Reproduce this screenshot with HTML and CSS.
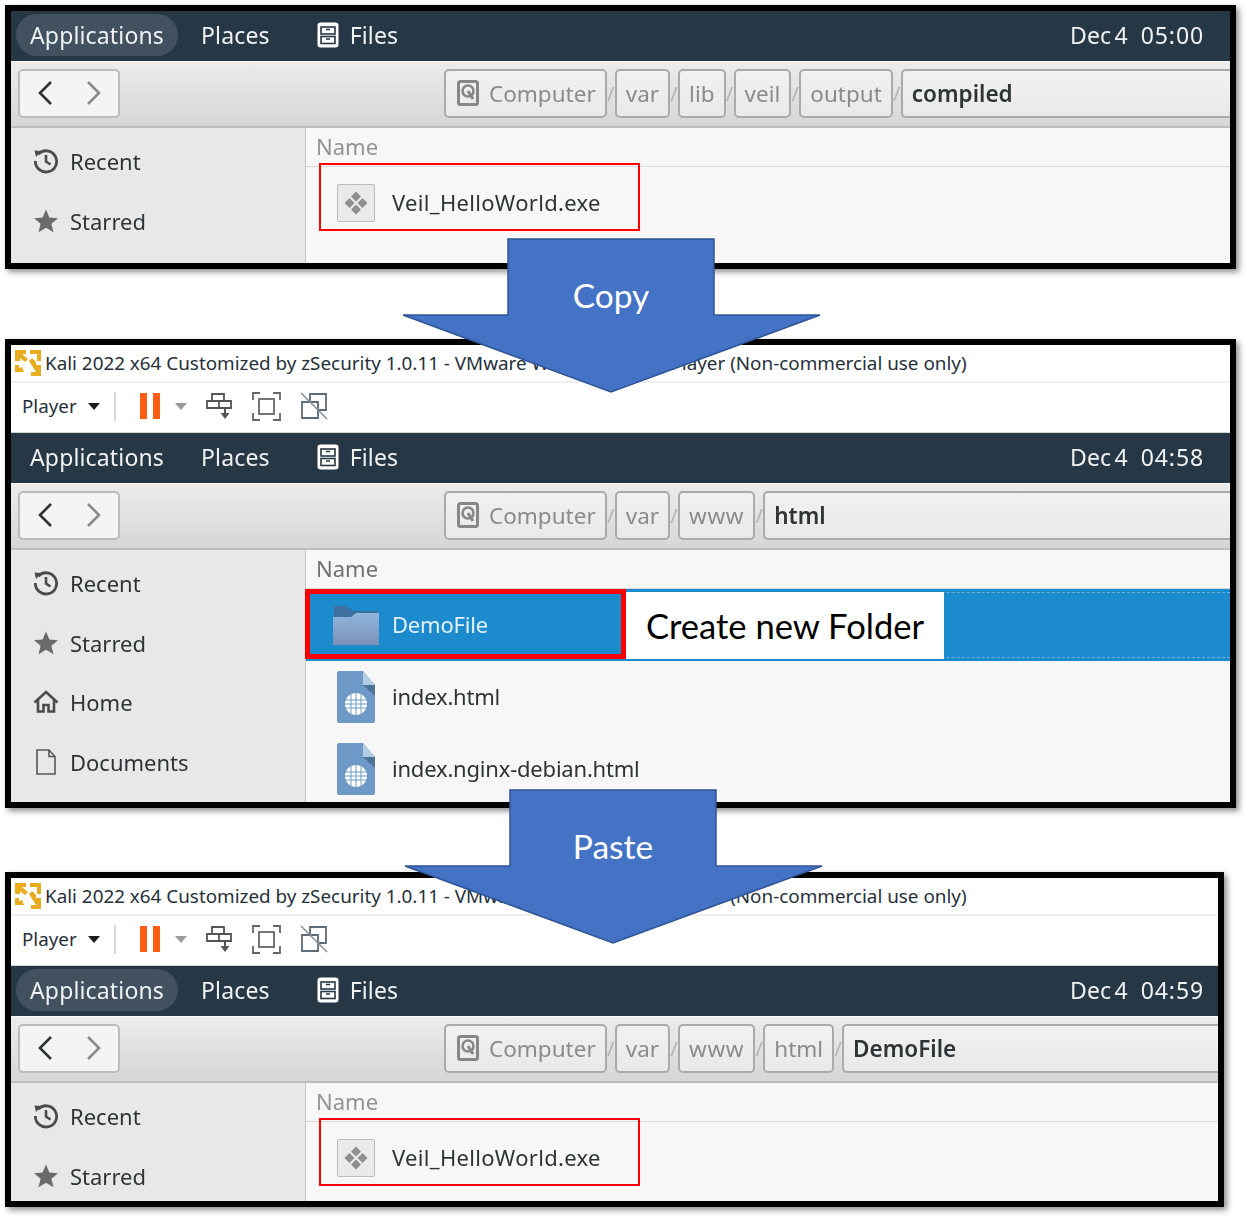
FILE: index.html
```html
<!DOCTYPE html>
<html lang="en">
    <head>
        <meta charset="UTF-8" />
        <title>Copy Veil_HelloWorld.exe to the web folder</title>
        <link rel="stylesheet" href="styles.css">
    </head>
    <body>
        <!-- Icons used more than once -->
        <svg class="sprite" aria-hidden="true">
            <defs>
                <linearGradient id="folderFront" x1="0" y1="0" x2="0" y2="1">
                    <stop offset="0" stop-color="#8fb6de" />
                    <stop offset="1" stop-color="#7c90b6" />
                </linearGradient>
            </defs>
            <symbol id="i-cabinet" viewBox="0 0 22 26">
                <rect x="0.5" y="0.5" width="21" height="25" rx="3" fill="#fff" />
                <rect x="4" y="5" width="14" height="7" fill="none" stroke="#263746" stroke-width="1.6" />
                <rect x="4" y="14.5" width="14" height="7" fill="none" stroke="#263746" stroke-width="1.6" />
                <path d="M9 7.5h4M9 17h4" stroke="#263746" stroke-width="1.6" />
            </symbol>
            <symbol id="i-back" viewBox="0 0 16 26">
                <path d="M14 2 3 13l11 11" fill="none" stroke="#2e3436" stroke-width="2.6" />
            </symbol>
            <symbol id="i-forward" viewBox="0 0 16 26">
                <path d="M2 2l11 11L2 24" fill="none" stroke="#8a8c8c" stroke-width="2.6" />
            </symbol>
            <symbol id="i-computer" viewBox="0 0 22 26">
                <rect x="1.5" y="1.5" width="19" height="23" rx="2" fill="none" stroke="#868888" stroke-width="3" />
                <circle cx="11" cy="11" r="5.5" fill="none" stroke="#868888" stroke-width="2.6" />
                <path d="M11 11l5 8" stroke="#868888" stroke-width="3" />
            </symbol>
            <symbol id="i-recent" viewBox="0 0 26 26">
                <path d="M5.2 6.2A10.6 10.6 0 1 1 2.4 13" fill="none" stroke="#4a4c4c" stroke-width="2.8" />
                <path d="M1.5 2.5 8.5 3 3 9z" fill="#4a4c4c" />
                <path d="M13 7v6.5l4.5 3" fill="none" stroke="#4a4c4c" stroke-width="2.6" />
            </symbol>
            <symbol id="i-star" viewBox="0 0 26 26">
                <path d="M13 1.5l3.4 8 8.6.7-6.6 5.6 2.1 8.5L13 19.8l-7.5 4.5 2.1-8.5L1 10.2l8.6-.7z" fill="#6a6c6c" />
            </symbol>
            <symbol id="i-home" viewBox="0 0 26 26">
                <path d="M1.5 13.5 13 3l11.5 10.5M5 11v11.5h5.5V16h5v6.5H21V11" fill="none" stroke="#4a4c4c" stroke-width="2.6" />
            </symbol>
            <symbol id="i-document" viewBox="0 0 22 26">
                <path d="M2 1h12l6 6.5V25H2zM14 1v6.5h6" fill="none" stroke="#555757" stroke-width="1.6" />
            </symbol>
            <symbol id="i-exe" viewBox="0 0 38 38">
                <rect x="0.5" y="0.5" width="37" height="37" rx="1.5" fill="#eaeaea" stroke="#bcbcbc" />
                <path d="M19 7.5l5 5-5 5-5-5zM19 20.5l5 5-5 5-5-5zM12.5 14l5 5-5 5-5-5zM25.5 14l5 5-5 5-5-5z" fill="#8f8f8f" />
            </symbol>
            <symbol id="i-folder" viewBox="0 0 46 40">
                <path d="M1 3a2 2 0 0 1 2-2h11l6 5h25v12H1z" fill="#3d6f9f" />
                <path d="M0 12h18l5-4h23v32H0z" fill="url(#folderFront)" />
            </symbol>
            <symbol id="i-html" viewBox="0 0 38 52">
                <path d="M2 0h24l12 14v36a2 2 0 0 1-2 2H2a2 2 0 0 1-2-2V2a2 2 0 0 1 2-2z" fill="#6e99c6" />
                <path d="M26 0l12 14H26z" fill="#b4cbe4" />
                <path d="M26 14h12v11z" fill="#4f7396" />
                <g fill="none" stroke="#6e99c6" stroke-width="1">
                    <circle cx="19" cy="33" r="11" fill="#fff" stroke="none" />
                    <path d="M8 29h22M8 33h22M8 37h22M14 22.500v21M19 22v22M24 22.500v21" />
                </g>
            </symbol>
            <symbol id="i-vmware" viewBox="0 0 26 26">
                <path d="M0 0h11v4H7l6 5-3 3-5-4v3H0zM15 0h11v11h-4V4h-7zM14 11l3-3 4 4v3h5v11H16v-4h5zM0 15h4v3l3-1 2 5H0z" fill="#e8ac1c" />
            </symbol>
            <symbol id="i-send" viewBox="0 0 26 26">
                <path d="M6 1h12v7H6zM1 8h12v7H1zM13 8h12v7H13z" fill="none" stroke="#555" stroke-width="1.8" />
                <path d="M19 15v6" stroke="#555" stroke-width="2" />
                <path d="M14.500 20h9L19 26z" fill="#555" />
            </symbol>
            <symbol id="i-fit" viewBox="0 0 29 29">
                <path d="M1 8V1h7M21 1h7v7M28 21v7h-7M8 28H1v-7" fill="none" stroke="#666" stroke-width="1.8" />
                <rect x="7" y="7" width="15" height="15" fill="none" stroke="#666" stroke-width="1.8" />
            </symbol>
            <symbol id="i-unity" viewBox="0 0 28 28">
                <path d="M10 9V2h16v16h-7M2 10h16v16H2z" fill="none" stroke="#5c6b78" stroke-width="1.8" />
                <path d="M1 1l26 26" stroke="#8b9096" stroke-width="1.6" />
            </symbol>
        </svg>

        <div class="page">
            <!-- First window: the compiled file -->
            <section class="shot">
                <div class="panel">
                    <span class="panel-item panel-active">Applications</span>
                    <span class="panel-item panel-places">Places</span>
                    <span class="panel-item panel-files"><svg class="icon-cabinet"><use href="#i-cabinet" /></svg>Files</span>
                    <span class="clock"><span class="clock-date">Dec 4</span><span class="clock-time">05:00</span></span>
                </div>
                <div class="pathbar">
                    <div class="nav">
                        <span class="nav-btn"><svg class="icon-nav"><use href="#i-back" /></svg></span>
                        <span class="nav-btn"><svg class="icon-nav"><use href="#i-forward" /></svg></span>
                    </div>
                    <div class="crumbs">
                        <span class="crumb"><svg class="icon-computer"><use href="#i-computer" /></svg>Computer</span>
                        <span class="sep">/</span>
                        <span class="crumb">var</span>
                        <span class="sep">/</span>
                        <span class="crumb">lib</span>
                        <span class="sep">/</span>
                        <span class="crumb">veil</span>
                        <span class="sep">/</span>
                        <span class="crumb">output</span>
                        <span class="sep">/</span>
                        <span class="crumb crumb-current">compiled</span>
                    </div>
                </div>
                <div class="browser browser-short">
                    <div class="sidebar">
                        <div class="side-row"><svg class="icon-side"><use href="#i-recent" /></svg>Recent</div>
                        <div class="side-row"><svg class="icon-side"><use href="#i-star" /></svg>Starred</div>
                    </div>
                    <div class="files">
                        <div class="files-head">Name</div>
                        <div class="file-row">
                            <svg class="icon-file"><use href="#i-exe" /></svg><span class="file-name file-name-exe">Veil_HelloWorld.exe</span>
                            <span class="mark-thin"></span>
                        </div>
                    </div>
                </div>
            </section>

            <!-- Second window: the new folder in /var/www/html -->
            <section class="shot shot-vm">
                <div class="titlebar"><svg class="icon-vmware"><use href="#i-vmware" /></svg>Kali 2022 x64 Customized by zSecurity 1.0.11 - VMware Workstation 16 Player (Non-commercial use only)</div>
                <div class="vmbar">
                    <span class="vm-player">Player</span>
                    <span class="caret"></span>
                    <span class="vm-divider"></span>
                    <span class="pause"></span>
                    <span class="caret caret-grey"></span>
                    <svg class="icon-send"><use href="#i-send" /></svg>
                    <svg class="icon-fit"><use href="#i-fit" /></svg>
                    <svg class="icon-unity"><use href="#i-unity" /></svg>
                </div>
                <div class="panel">
                    <span class="panel-item">Applications</span>
                    <span class="panel-item panel-places">Places</span>
                    <span class="panel-item panel-files"><svg class="icon-cabinet"><use href="#i-cabinet" /></svg>Files</span>
                    <span class="clock"><span class="clock-date">Dec 4</span><span class="clock-time">04:58</span></span>
                </div>
                <div class="pathbar">
                    <div class="nav">
                        <span class="nav-btn"><svg class="icon-nav"><use href="#i-back" /></svg></span>
                        <span class="nav-btn"><svg class="icon-nav"><use href="#i-forward" /></svg></span>
                    </div>
                    <div class="crumbs">
                        <span class="crumb"><svg class="icon-computer"><use href="#i-computer" /></svg>Computer</span>
                        <span class="sep">/</span>
                        <span class="crumb">var</span>
                        <span class="sep">/</span>
                        <span class="crumb crumb-www">www</span>
                        <span class="sep">/</span>
                        <span class="crumb crumb-current">html</span>
                    </div>
                </div>
                <div class="browser browser-tall">
                    <div class="sidebar">
                        <div class="side-row"><svg class="icon-side"><use href="#i-recent" /></svg>Recent</div>
                        <div class="side-row"><svg class="icon-side"><use href="#i-star" /></svg>Starred</div>
                        <div class="side-row"><svg class="icon-side"><use href="#i-home" /></svg>Home</div>
                        <div class="side-row"><svg class="icon-side"><use href="#i-document" /></svg>Documents</div>
                    </div>
                    <div class="files">
                        <div class="files-head files-head-dark">Name</div>
                        <div class="file-row file-selected">
                            <svg class="icon-folder"><use href="#i-folder" /></svg><span class="file-name">DemoFile</span>
                            <span class="mark-thick"></span>
                            <span class="note">Create new Folder</span>
                        </div>
                        <div class="file-row">
                            <svg class="icon-file icon-html"><use href="#i-html" /></svg><span class="file-name">index.html</span>
                        </div>
                        <div class="file-row">
                            <svg class="icon-file icon-html"><use href="#i-html" /></svg><span class="file-name">index.nginx-debian.html</span>
                        </div>
                    </div>
                </div>
            </section>

            <!-- Third window: the file after pasting -->
            <section class="shot shot-vm shot-narrow">
                <div class="titlebar"><svg class="icon-vmware"><use href="#i-vmware" /></svg>Kali 2022 x64 Customized by zSecurity 1.0.11 - VMware Workstation 16 Player (Non-commercial use only)</div>
                <div class="vmbar">
                    <span class="vm-player">Player</span>
                    <span class="caret"></span>
                    <span class="vm-divider"></span>
                    <span class="pause"></span>
                    <span class="caret caret-grey"></span>
                    <svg class="icon-send"><use href="#i-send" /></svg>
                    <svg class="icon-fit"><use href="#i-fit" /></svg>
                    <svg class="icon-unity"><use href="#i-unity" /></svg>
                </div>
                <div class="panel">
                    <span class="panel-item panel-active">Applications</span>
                    <span class="panel-item panel-places">Places</span>
                    <span class="panel-item panel-files"><svg class="icon-cabinet"><use href="#i-cabinet" /></svg>Files</span>
                    <span class="clock"><span class="clock-date">Dec 4</span><span class="clock-time">04:59</span></span>
                </div>
                <div class="pathbar">
                    <div class="nav">
                        <span class="nav-btn"><svg class="icon-nav"><use href="#i-back" /></svg></span>
                        <span class="nav-btn"><svg class="icon-nav"><use href="#i-forward" /></svg></span>
                    </div>
                    <div class="crumbs">
                        <span class="crumb"><svg class="icon-computer"><use href="#i-computer" /></svg>Computer</span>
                        <span class="sep">/</span>
                        <span class="crumb">var</span>
                        <span class="sep">/</span>
                        <span class="crumb crumb-www">www</span>
                        <span class="sep">/</span>
                        <span class="crumb">html</span>
                        <span class="sep">/</span>
                        <span class="crumb crumb-current">DemoFile</span>
                    </div>
                </div>
                <div class="browser browser-small">
                    <div class="sidebar">
                        <div class="side-row"><svg class="icon-side"><use href="#i-recent" /></svg>Recent</div>
                        <div class="side-row"><svg class="icon-side"><use href="#i-star" /></svg>Starred</div>
                    </div>
                    <div class="files">
                        <div class="files-head">Name</div>
                        <div class="file-row">
                            <svg class="icon-file"><use href="#i-exe" /></svg><span class="file-name file-name-exe">Veil_HelloWorld.exe</span>
                            <span class="mark-thin"></span>
                        </div>
                    </div>
                </div>
            </section>

            <!-- Arrows over the windows -->
            <div class="arrow arrow-copy">
                <svg class="arrow-shape" viewBox="0 0 420 156"><polygon points="106,1 312,1 312,77 418,77 209,154 1,77 106,77" /></svg>
                <span class="arrow-label">Copy</span>
            </div>
            <div class="arrow arrow-paste">
                <svg class="arrow-shape" viewBox="0 0 420 156"><polygon points="106,1 312,1 312,77 418,77 209,154 1,77 106,77" /></svg>
                <span class="arrow-label">Paste</span>
            </div>
        </div>
    </body>
</html>
```

FILE: styles.css
```css
/* Page */
body {
    margin: 0;
    background-color: white;
    font-family: "Noto Sans", sans-serif;
}

.sprite {
    position: absolute;
    width: 0;
    height: 0;
}

.page {
    position: relative;
    width: 1249px;
    height: 1220px;
    padding: 5px 0 0 5px;
    box-sizing: border-box;
    overflow: hidden;
}

/* Window frames */
.shot {
    width: 1231px;
    box-sizing: border-box;
    border: 6px solid black;
    box-shadow: 3px 3px 6px rgba(0, 0, 0, 0.45);
    background-color: white;
    overflow: hidden;
}

.shot-vm {
    margin-top: 70px;
}

.shot-narrow {
    width: 1219px;
    margin-top: 64px;
}

/* VMware title and toolbar */
.titlebar {
    height: 38px;
    display: flex;
    align-items: center;
    padding-left: 4px;
    box-sizing: border-box;
    border-bottom: 2px solid #efefef;
    font-size: 18.85px;
    color: #26303a;
    white-space: nowrap;
}

.icon-vmware {
    width: 26px;
    height: 26px;
    margin-right: 4px;
    flex: none;
}

.vmbar {
    height: 50px;
    display: flex;
    align-items: center;
    padding: 0 0 3px 11px;
    box-sizing: border-box;
    border-bottom: 1px solid #d6d6d6;
}

.vm-player {
    font-size: 18.8px;
    color: #26303a;
    width: 66px;
}

.caret {
    width: 0;
    height: 0;
    border-left: 6.5px solid transparent;
    border-right: 6.5px solid transparent;
    border-top: 7px solid #1c1c1c;
}

.caret-grey {
    border-top-color: #999;
    margin-left: 15px;
}

.vm-divider {
    width: 2px;
    height: 29px;
    margin: 0 24px 0 14px;
    background-color: #d8d8d8;
}

.pause {
    width: 6px;
    height: 26px;
    border-left: 7px solid #ff5c13;
    border-right: 7px solid #ff5c13;
}

.icon-send {
    width: 26px;
    height: 26px;
    margin-left: 19px;
}

.icon-fit {
    width: 29px;
    height: 29px;
    margin-left: 20px;
}

.icon-unity {
    width: 28px;
    height: 28px;
    margin-left: 19px;
}

/* Gnome top panel */
.panel {
    height: 50px;
    display: flex;
    align-items: center;
    padding: 0 27px 2px 5px;
    box-sizing: border-box;
    background-color: #263746;
    color: #f0f2f2;
    font-size: 23px;
    letter-spacing: 0.15px;
}

.shot-narrow .panel {
    padding-right: 15px;
}

.panel-item {
    display: flex;
    align-items: center;
    height: 42px;
    padding: 0 14px;
    border-radius: 21px;
}

.panel-active {
    background-color: #415160;
}

.panel-places {
    margin-left: 9px;
}

.panel-files {
    margin-left: 19px;
}

.icon-cabinet {
    width: 22px;
    height: 26px;
    margin-right: 11px;
}

.clock {
    margin-left: auto;
    display: flex;
    gap: 13px;
}

.clock-date {
    word-spacing: -3px;
}

.clock-time {
    letter-spacing: 0.9px;
    margin-right: -1px;
}

/* Nautilus path bar */
.pathbar {
    height: 67px;
    display: flex;
    align-items: center;
    padding: 0 0 2px 7px;
    box-sizing: border-box;
    border-top: 1px solid #fafafa;
    border-bottom: 2px solid #bdbdbd;
    background: linear-gradient(#ececec, #d6d6d6);
}

.nav {
    display: flex;
    width: 102px;
    height: 49px;
    box-sizing: border-box;
    border: 2px solid #bcbcbc;
    border-radius: 5px;
    background-color: #f4f4f4;
    flex: none;
}

.nav-btn {
    flex: 1;
    display: flex;
    align-items: center;
    justify-content: center;
}

.icon-nav {
    width: 16px;
    height: 26px;
}

.crumbs {
    flex: 1;
    display: flex;
    align-items: center;
    margin-left: 324px;
    font-size: 22.5px;
}

.crumb {
    height: 49px;
    display: flex;
    align-items: center;
    padding: 0 9px;
    box-sizing: border-box;
    border: 2px solid #aaaaaa;
    border-radius: 5px;
    background: linear-gradient(#f1f1f1, #e9e9e9);
    color: #8a8c8c;
}

.crumb-www {
    letter-spacing: 0.7px;
}

.crumb-current {
    flex: 1;
    font-weight: 600;
    color: #2e3436;
    border-right: 0;
    border-radius: 5px 0 0 5px;
}

.icon-computer {
    width: 22px;
    height: 26px;
    margin: 0 10px 0 2px;
}

.sep {
    width: 8px;
    flex: none;
    text-align: center;
    color: #b4b4b4;
    font-size: 20px;
}

/* Sidebar and file list */
.browser {
    display: flex;
    font-size: 22px;
    color: #2e3436;
    overflow: hidden;
}

.browser-short {
    height: 135px;
}

.browser-tall {
    height: 252px;
}

.browser-small {
    height: 118px;
}

.sidebar {
    width: 295px;
    flex: none;
    padding: 3px 0 0 22px;
    box-sizing: border-box;
    border-right: 1px solid #c6c6c6;
    background-color: #e8e8e8;
}

.side-row {
    height: 59.7px;
    display: flex;
    align-items: center;
}

.icon-side {
    width: 26px;
    height: 26px;
    margin-right: 11px;
}

.files {
    flex: 1;
    background-color: #f7f7f7;
}

.files-head {
    height: 38px;
    padding-left: 10px;
    line-height: 36px;
    border-bottom: 1px solid #d8d8d8;
    color: #929494;
}

.files-head-dark {
    color: #707272;
}

.file-row {
    position: relative;
    height: 72px;
    display: flex;
    align-items: center;
    padding-left: 31px;
}

.file-name {
    margin-bottom: 2px;
    letter-spacing: -0.2px;
}

.file-name-exe {
    letter-spacing: 0.32px;
}

.icon-file {
    width: 38px;
    height: 38px;
    margin-right: 17px;
    flex: none;
}

.icon-html {
    height: 52px;
}

.icon-folder {
    width: 46px;
    height: 40px;
    margin: 0 13px 0 -4px;
    flex: none;
}

.file-selected {
    background-color: #1b8bce;
    color: #e4f1fa;
}

.file-selected::before {
    content: "";
    position: absolute;
    left: 0;
    right: 0;
    top: 3px;
    bottom: 3px;
    border-top: 1px dashed #6cb4e0;
    border-bottom: 1px dashed #6cb4e0;
}

/* Soft edges of the scaled-up screenshots */
.panel,
.pathbar,
.sidebar,
.files-head,
.file-name {
    filter: blur(0.35px);
}

/* Marks drawn over the screenshots */
.mark-thin {
    position: absolute;
    left: 13px;
    top: -4px;
    width: 321px;
    height: 68px;
    box-sizing: border-box;
    border: 2px solid #f00;
}

.mark-thick {
    position: absolute;
    left: -1px;
    top: 0;
    width: 321px;
    height: 70px;
    box-sizing: border-box;
    border: 5px solid #f00;
}

.note {
    position: absolute;
    left: 320px;
    top: 3px;
    width: 318px;
    height: 67px;
    display: flex;
    align-items: center;
    justify-content: center;
    background-color: white;
    color: black;
    font-family: "Lato", sans-serif;
    font-size: 34.6px;
}

.arrow {
    position: absolute;
    width: 420px;
    height: 156px;
}

.arrow-copy {
    left: 402px;
    top: 238px;
}

.arrow-paste {
    left: 404px;
    top: 789px;
}

.arrow-shape {
    display: block;
    width: 420px;
    height: 156px;
}

.arrow-shape polygon {
    fill: #4472c4;
    stroke: #2f5597;
    stroke-width: 1.5;
}

.arrow-label {
    position: absolute;
    left: 0;
    right: 2px;
    top: 37px;
    text-align: center;
    color: white;
    font-family: "Lato", sans-serif;
    font-size: 33.5px;
}
```
